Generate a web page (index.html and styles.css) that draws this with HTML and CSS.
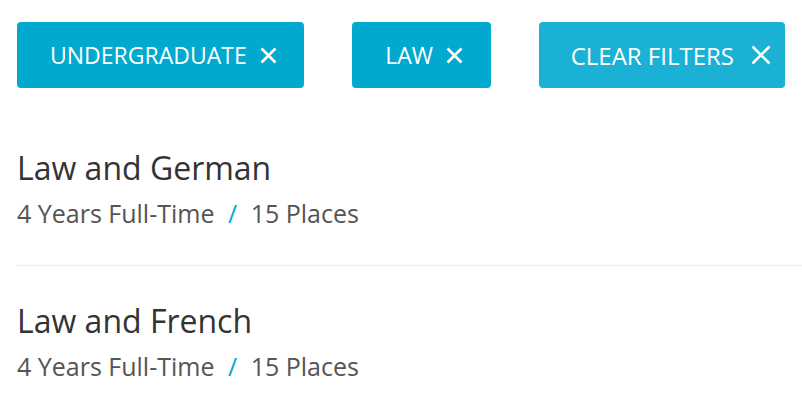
FILE: index.html
```html
<!DOCTYPE html>
<html lang="en">
<head>
<meta charset="utf-8">
<title>Courses</title>
<link rel="stylesheet" href="styles.css">
</head>
<body>
<div class="page">
  <div class="filters">
    <button class="chip">UNDERGRADUATE
      <svg class="x" viewBox="0 0 17 17"><path d="M1.5 1.5 L15.5 15.5 M15.5 1.5 L1.5 15.5"/></svg>
    </button>
    <button class="chip">LAW
      <svg class="x" viewBox="0 0 17 17"><path d="M1.5 1.5 L15.5 15.5 M15.5 1.5 L1.5 15.5"/></svg>
    </button>
    <button class="chip chip-clear">CLEAR FILTERS
      <svg class="x x-lg" viewBox="0 0 20 20"><path d="M1.5 1.5 L18.5 18.5 M18.5 1.5 L1.5 18.5"/></svg>
    </button>
  </div>
  <ul class="courses">
    <li class="course">
      <h2 class="course-title">Law and German</h2>
      <p class="course-meta">4 Years Full-Time <span class="sep">/</span> 15 Places</p>
    </li>
    <li class="course">
      <h2 class="course-title">Law and French</h2>
      <p class="course-meta">4 Years Full-Time <span class="sep">/</span> 15 Places</p>
    </li>
  </ul>
</div>
</body>
</html>
```
FILE: styles.css
```css
* { box-sizing: border-box; }
html, body { margin: 0; padding: 0; background: #fff; }
body { font-family: "Open Sans", "Liberation Sans", sans-serif; overflow: hidden; }
.page { padding: 22px 0 0 17px; }
.filters { display: flex; gap: 48px; margin-bottom: 25px; }
.chip {
  display: inline-flex; align-items: center; gap: 13px;
  height: 66px; padding: 0 27.6px 0 33px;
  background: #00a9cd; color: #fff; border: 0; border-radius: 4px;
  font-family: inherit; font-size: 23px; font-weight: 400;
  cursor: pointer;
}
.chip-clear { background: #1ab1d5; padding: 0 14px 0 32px; gap: 17px; font-size: 24px; }
.x { width: 17px; height: 17px; stroke: #fff; stroke-width: 2.6; fill: none; }
.x-lg { width: 20px; height: 20px; }
.courses { list-style: none; margin: 0; padding: 0; }
.course { padding: 35px 0 36px; border-bottom: 1px solid #ececec; }
.course:last-child { border-bottom: 0; }
.course-title { margin: 0; font-size: 32px; line-height: 40px; font-weight: 400; color: #333; }
.course-meta { margin: 9px 0 0; font-size: 25px; line-height: 32px; color: #555; }
.sep { color: #00a9cd; margin: 0 7px; }
```
